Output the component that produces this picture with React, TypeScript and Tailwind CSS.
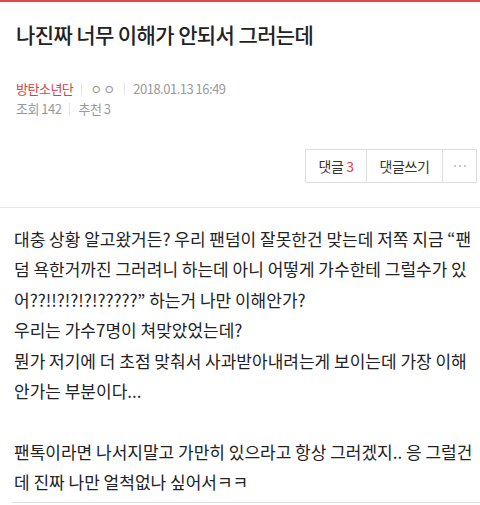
const FONT = "font-['Noto_Sans_CJK_KR','Noto_Sans',sans-serif]"

function MetaDivider() {
  return <span className="mx-[8px] inline-block h-[12px] w-px bg-[#e3e3e3]" />
}

function PostHeader() {
  return (
    <div className="px-4 pt-[17px]">
      <h1 className="text-[21px] leading-[30px] font-medium tracking-[-0.6px] text-[#222]">
        나진짜 너무 이해가 안되서 그러는데
      </h1>
      <div className="mt-[30px] text-[13px] leading-[20px] tracking-[-0.5px] text-[#9a9a9a]">
        <div className="flex items-center">
          <span className="text-[#c9474c]">방탄소년단</span>
          <MetaDivider />
          <span className="tracking-[1px]">ㅇㅇ</span>
          <MetaDivider />
          <span>2018.01.13 16:49</span>
        </div>
        <div className="flex items-center">
          <span>조회 142</span>
          <MetaDivider />
          <span>추천 3</span>
        </div>
      </div>
    </div>
  )
}

function ActionButtons() {
  return (
    <div className="mt-[30px] flex justify-end pr-[3px]">
      <div className="flex h-[34px] border border-[#dedede] text-[14px] tracking-[-0.4px] text-[#333]">
        <button className="flex w-[60px] items-center justify-center">
          댓글&nbsp;<span className="text-[#d0464a]">3</span>
        </button>
        <button className="flex w-[76px] items-center justify-center border-l border-[#dedede]">
          댓글쓰기
        </button>
        <button className="flex w-[34px] items-center justify-center gap-[3px] border-l border-[#dedede]">
          <span className="h-[2px] w-[2px] rounded-full bg-[#b5b5b5]" />
          <span className="h-[2px] w-[2px] rounded-full bg-[#b5b5b5]" />
          <span className="h-[2px] w-[2px] rounded-full bg-[#b5b5b5]" />
        </button>
      </div>
    </div>
  )
}

export default function App() {
  return (
    <div className={`${FONT} h-[505px] w-[480px] overflow-hidden bg-white`}>
      <div className="h-[2px] bg-[#d64b4b]" />
      <PostHeader />
      <ActionButtons />
      <div className="mt-[24px] h-px bg-[#e6e6e6]" />

      <div className="pt-[16px] pl-[14px] pr-[6px] text-[17px] leading-[30.4px] tracking-normal text-[#222]">
        <p>
          대충 상황 알고왔거든? 우리 팬덤이 잘못한건 맞는데 저쪽 지금 “팬덤 욕한거까진 그러려니 하는데 아니 어떻게 가수한테 그럴수가 있어??!!?!?!?!?????” 하는거 나만 이해안가?
        </p>
        <p>우리는 가수7명이 쳐맞았었는데?</p>
        <p>뭔가 저기에 더 초점 맞춰서 사과받아내려는게 보이는데 가장 이해안가는 부분이다...</p>
        <p>&nbsp;</p>
        <p>팬톡이라면 나서지말고 가만히 있으라고 항상 그러겠지.. 응 그럴건데 진짜 나만 얼척없나 싶어서ㅋㅋ</p>
      </div>
      <div className="mt-[4px] ml-[12px] h-px bg-[#e2dcdc]" />
    </div>
  )
}
